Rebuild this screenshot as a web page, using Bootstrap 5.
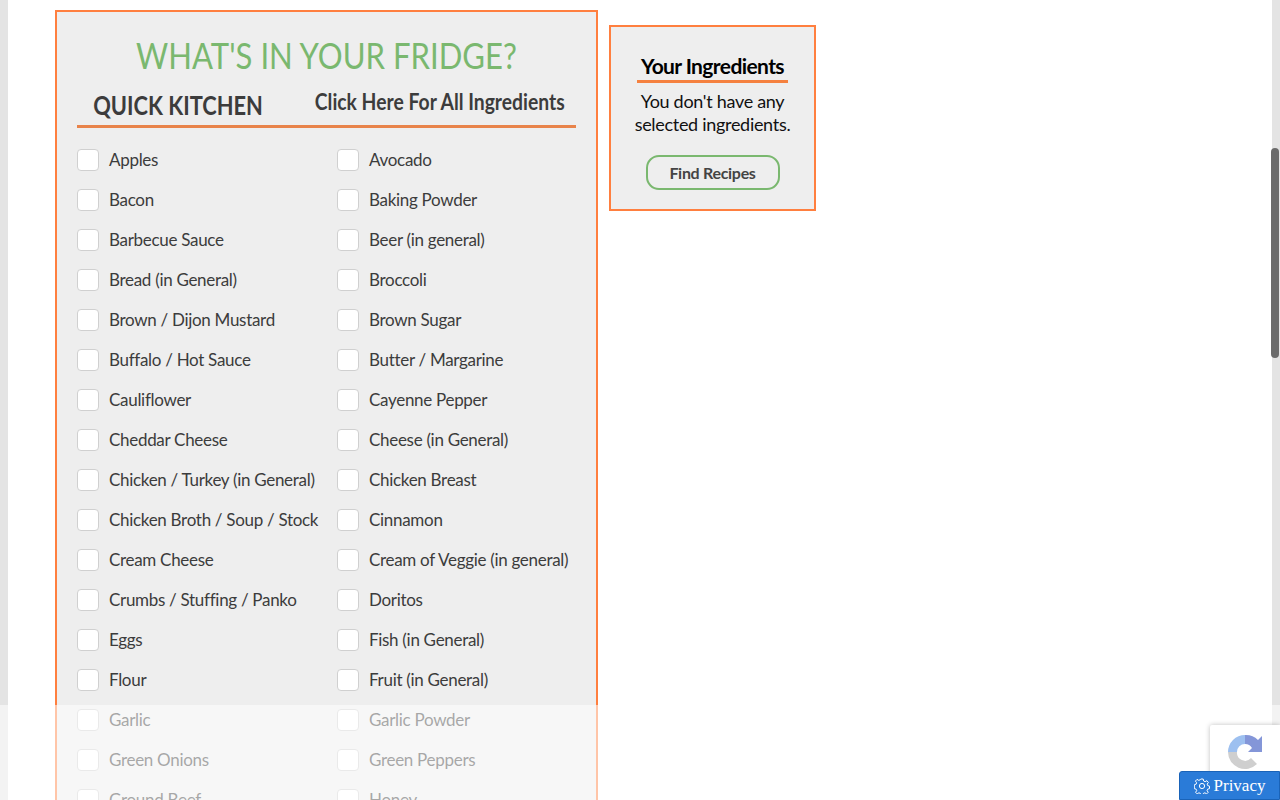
<!DOCTYPE html>
<html lang="en">
<head>
<meta charset="utf-8">
<title>What's in your fridge?</title>
<link href="https://cdn.jsdelivr.net/npm/bootstrap@5.3.0/dist/css/bootstrap.min.css" rel="stylesheet">
<style>
html,body{height:800px;overflow:hidden;background:#fff}
body{font-family:Lato,Roboto,sans-serif;color:#3c3c3c}
.shell{height:800px}
.gutter{width:8px;background:#e4e4e4;flex:none}
.main-area{padding:10px 0 0 47px}
.panel-box{background:#eee;border:2px solid #ff7f3f}
.fridge{width:543px;height:900px;padding:18px 20px 0 20px}
.fridge-title{font-size:37px;line-height:50px;color:#7ab86f;text-align:center;margin:0;font-weight:400;white-space:nowrap;transform:scaleX(.84)}
.tab-row{height:48px;border-bottom:3px solid #e8834a;margin-bottom:12px}
.tab-a{width:201px;font-size:26px;font-weight:700;line-height:44px;text-align:center;padding-top:3px;white-space:nowrap}
.tab-a span,.tab-b span{display:inline-block}
.tab-a span{transform:scaleX(.84)}
.tab-b{width:299px;font-size:23px;font-weight:700;line-height:42px;text-align:center;padding-left:13px;white-space:nowrap}
.tab-b span{transform:scaleX(.84)}
.ing-grid{display:grid;grid-template-columns:260px 240px;grid-auto-rows:40px}
.ing{font-size:17px;line-height:40px;height:40px;margin:0;cursor:pointer;white-space:nowrap;letter-spacing:-.3px}
.tick{appearance:none;width:22px;height:22px;background:#fff;border:1px solid #d0d0d0;border-radius:4px;margin:0 10px 0 0;flex:none}
.basket{width:207px;height:186px;margin:15px 0 0 11px;padding:26px 0 0;text-align:center;color:#111}
.basket-title{font-size:21px;font-weight:700;line-height:26px;color:#000;margin:0 26px;padding-bottom:1px;border-bottom:3px solid #f5813f;white-space:nowrap;letter-spacing:-.6px}
.basket-text{font-size:18px;line-height:23px;margin:7px 0 19px;letter-spacing:-.3px}
.find-btn{width:134px;height:35px;padding:0;border:2px solid #7ab86f;border-radius:13px;font-size:16px;font-weight:700;line-height:30px;color:#444;background:transparent;letter-spacing:-.3px}
.thumb{position:absolute;right:1px;top:148px;width:8px;height:210px;border-radius:4px;background:#6b6b6b}
.fade-veil{position:absolute;left:0;right:0;top:705px;height:95px;background:rgba(255,255,255,.55)}
.captcha{position:absolute;left:1210px;top:725px;width:70px;height:60px;background:#fff;box-shadow:0 0 5px rgba(0,0,0,.25);border-radius:2px 0 0 2px}
.captcha svg{position:absolute;left:16px;top:8px}
.privacy{position:absolute;left:1179px;top:771px;width:101px;height:29px;padding:0;background:#2a7bd8;border:1px solid #1a63b8;border-radius:3px 0 0 0;color:#fff;font:17px/27px "Liberation Serif",serif}
</style>
</head>
<body>
<div class="shell d-flex position-relative">
  <div class="gutter"></div>
  <div class="main-area flex-grow-1 d-flex align-items-start">
    <div class="panel-box fridge">
      <h1 class="fridge-title">WHAT'S IN YOUR FRIDGE?</h1>
      <div class="tab-row d-flex">
        <div class="tab-a"><span>QUICK KITCHEN</span></div>
        <div class="tab-b"><span>Click Here For All Ingredients</span></div>
      </div>
      <div class="ing-grid">
        <label class="ing d-flex align-items-center"><input class="tick" type="checkbox">Apples</label>
        <label class="ing d-flex align-items-center"><input class="tick" type="checkbox">Avocado</label>
        <label class="ing d-flex align-items-center"><input class="tick" type="checkbox">Bacon</label>
        <label class="ing d-flex align-items-center"><input class="tick" type="checkbox">Baking Powder</label>
        <label class="ing d-flex align-items-center"><input class="tick" type="checkbox">Barbecue Sauce</label>
        <label class="ing d-flex align-items-center"><input class="tick" type="checkbox">Beer (in general)</label>
        <label class="ing d-flex align-items-center"><input class="tick" type="checkbox">Bread (in General)</label>
        <label class="ing d-flex align-items-center"><input class="tick" type="checkbox">Broccoli</label>
        <label class="ing d-flex align-items-center"><input class="tick" type="checkbox">Brown / Dijon Mustard</label>
        <label class="ing d-flex align-items-center"><input class="tick" type="checkbox">Brown Sugar</label>
        <label class="ing d-flex align-items-center"><input class="tick" type="checkbox">Buffalo / Hot Sauce</label>
        <label class="ing d-flex align-items-center"><input class="tick" type="checkbox">Butter / Margarine</label>
        <label class="ing d-flex align-items-center"><input class="tick" type="checkbox">Cauliflower</label>
        <label class="ing d-flex align-items-center"><input class="tick" type="checkbox">Cayenne Pepper</label>
        <label class="ing d-flex align-items-center"><input class="tick" type="checkbox">Cheddar Cheese</label>
        <label class="ing d-flex align-items-center"><input class="tick" type="checkbox">Cheese (in General)</label>
        <label class="ing d-flex align-items-center"><input class="tick" type="checkbox">Chicken / Turkey (in General)</label>
        <label class="ing d-flex align-items-center"><input class="tick" type="checkbox">Chicken Breast</label>
        <label class="ing d-flex align-items-center"><input class="tick" type="checkbox">Chicken Broth / Soup / Stock</label>
        <label class="ing d-flex align-items-center"><input class="tick" type="checkbox">Cinnamon</label>
        <label class="ing d-flex align-items-center"><input class="tick" type="checkbox">Cream Cheese</label>
        <label class="ing d-flex align-items-center"><input class="tick" type="checkbox">Cream of Veggie (in general)</label>
        <label class="ing d-flex align-items-center"><input class="tick" type="checkbox">Crumbs / Stuffing / Panko</label>
        <label class="ing d-flex align-items-center"><input class="tick" type="checkbox">Doritos</label>
        <label class="ing d-flex align-items-center"><input class="tick" type="checkbox">Eggs</label>
        <label class="ing d-flex align-items-center"><input class="tick" type="checkbox">Fish (in General)</label>
        <label class="ing d-flex align-items-center"><input class="tick" type="checkbox">Flour</label>
        <label class="ing d-flex align-items-center"><input class="tick" type="checkbox">Fruit (in General)</label>
        <label class="ing d-flex align-items-center"><input class="tick" type="checkbox">Garlic</label>
        <label class="ing d-flex align-items-center"><input class="tick" type="checkbox">Garlic Powder</label>
        <label class="ing d-flex align-items-center"><input class="tick" type="checkbox">Green Onions</label>
        <label class="ing d-flex align-items-center"><input class="tick" type="checkbox">Green Peppers</label>
        <label class="ing d-flex align-items-center"><input class="tick" type="checkbox">Ground Beef</label>
        <label class="ing d-flex align-items-center"><input class="tick" type="checkbox">Honey</label>
      </div>
    </div>
    <div class="panel-box basket">
      <h2 class="basket-title">Your Ingredients</h2>
      <p class="basket-text">You don't have any<br>selected ingredients.</p>
      <button class="find-btn" type="button">Find Recipes</button>
    </div>
  </div>
  <div class="gutter"></div>
  <div class="thumb"></div>
  <div class="fade-veil"></div>
  <div class="captcha">
    <svg width="38" height="40" viewBox="0 0 38 40"><path d="M19 2A17 17 0 0 0 2 19h9a8 8 0 0 1 8-8z" fill="#9dc0f0"/><path d="M19 2v9a8 8 0 0 1 7 4l-4 4h14V3l-4 4A17 17 0 0 0 19 2z" fill="#8496d8"/><path d="M2 19a17 17 0 0 0 29 12l-6-6a8 8 0 0 1-14-6z" fill="#cfcfcf"/></svg>
  </div>
  <button class="privacy d-flex align-items-center justify-content-center gap-1" type="button">
    <svg width="16" height="16" viewBox="0 0 16 16" fill="none" stroke="#fff" stroke-width="1"><circle cx="8" cy="8" r="2.6"/><path d="M6.8 1h2.400l.4 2 1.500.7 1.800-1 1.500 1.800-1.200 1.600.4 1.400 1.900.7v2.400l-1.900.6-.5 1.400 1.100 1.700-1.600 1.600-1.700-1.100-1.500.6-.4 1.900H6.800l-.4-1.900-1.500-.6-1.700 1.100-1.600-1.600 1.100-1.700-.5-1.400-1.900-.6V6.800l1.900-.7.4-1.400-1.200-1.600L3 1.400l1.800 1 1.500-.7z"/></svg>
    Privacy
  </button>
</div>
<script src="https://cdn.jsdelivr.net/npm/bootstrap@5.3.0/dist/js/bootstrap.bundle.min.js"></script>
</body>
</html>
